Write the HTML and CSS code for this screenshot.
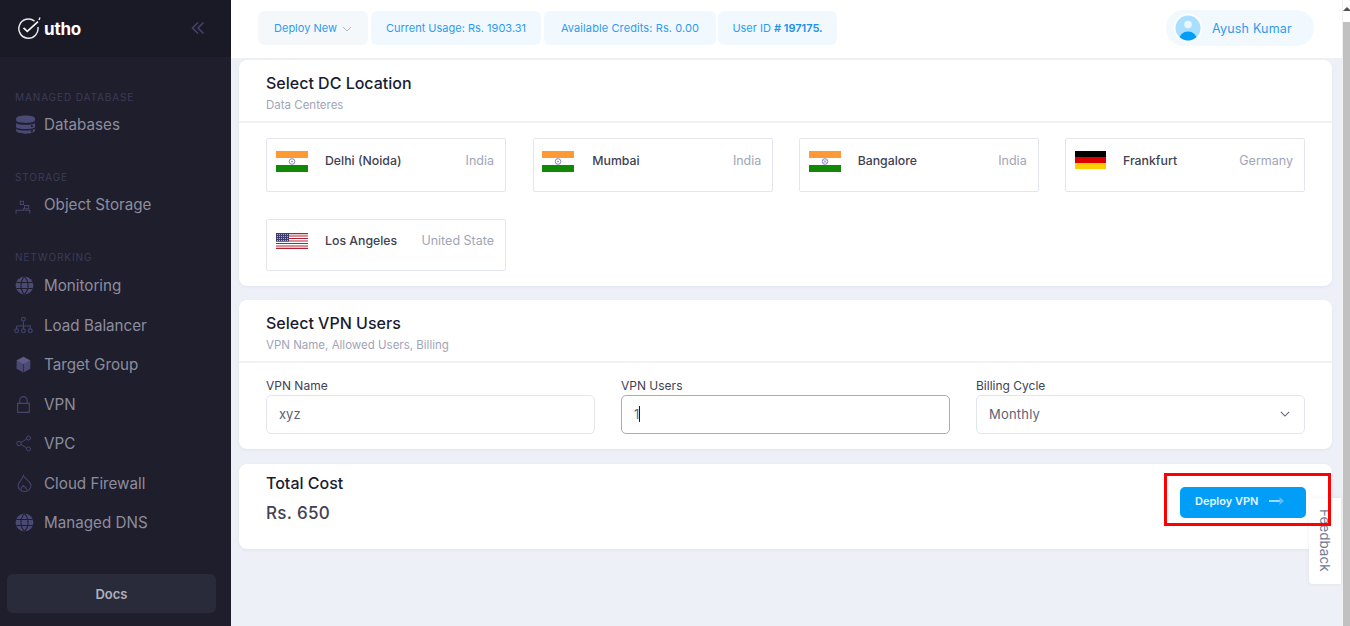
FILE: index.html
```html
<!DOCTYPE html>
<html lang="en">
<head>
<meta charset="utf-8">
<title>Deploy VPN</title>
<link rel="stylesheet" href="styles.css">
</head>
<body>
<div class="app">
  <aside class="sidebar">
    <div class="brand">
      <div class="logo">
        <svg class="logo-mark" viewBox="0 0 26 24" width="26" height="24"><path d="M17.5 5.2A9.6 9.6 0 1 0 20.9 11" fill="none" stroke="#e8e8e8" stroke-width="1.5"/><path d="M6.5 11.8l3.8 3.6L21 5.6" fill="none" stroke="#f4f4f4" stroke-width="1.7"/><path d="M23 1.5l-1 2.6" stroke="#f4f4f4" stroke-width="1.3"/></svg>
        <span class="logo-text">utho</span>
      </div>
      <svg class="collapse" viewBox="0 0 14 14" width="14" height="14"><path d="M7 1.5L1.5 7 7 12.5M12.5 1.5L7 7l5.5 5.5" fill="none" stroke="#45456f" stroke-width="1.5"/></svg>
    </div>
    <nav class="nav">
      <div class="nav-label">MANAGED DATABASE</div>
      <a class="nav-item"><svg class="nav-icon" viewBox="-1 0 18 18"><path d="M0 3.5C0 1.500 4 .5 9 .5s9 1 9 3v1.500c0 1.500-4 2.500-9 2.500S0 6.500 0 5zM0 7.500c2 1.300 5 1.800 9 1.800s7-.5 9-1.800v4c-2 1.300-5 1.800-9 1.800s-7-.5-9-1.800zM0 13c2 1.300 5 1.800 9 1.800s7-.5 9-1.800v2c0 1.500-4 2.700-9 2.700S0 16.500 0 15z" fill="#4a4a75"/><circle cx="15" cy="10.500" r="1" fill="#1e1e2d"/><circle cx="15" cy="15.500" r="1" fill="#1e1e2d"/></svg>Databases</a>
      <div class="nav-label spaced">STORAGE</div>
      <a class="nav-item"><svg class="nav-icon" viewBox="0 0 18 18" fill="none" stroke="#45456f" stroke-width="1"><path d="M5 6h3v3H5zM9 10h4v3H9zM1 17.500v-3h7v-2M9 14.500h5v3"/></svg>Object Storage</a>
      <div class="nav-label spaced nav-label-net">NETWORKING</div>
      <a class="nav-item"><svg class="nav-icon" viewBox="1 1 16 16" fill="none"><circle cx="9" cy="9" r="7.500" fill="#4a4a75"/><path d="M2 6.500h14M2 11.500h14M9 1.500c-4 4-4 11 0 15M9 1.500c4 4 4 11 0 15" stroke="#1e1e2d" stroke-width=".9"/></svg>Monitoring</a>
      <a class="nav-item"><svg class="nav-icon" viewBox="1 0 18 18" fill="none" stroke="#45456f" stroke-width="1"><circle cx="9" cy="3" r="1.800"/><circle cx="2.500" cy="14" r="1.800"/><circle cx="9" cy="14" r="1.800"/><circle cx="15.500" cy="14" r="1.800"/><path d="M9 5v7M2.500 9.500h13v2.500M2.500 9.500v2.500"/></svg>Load Balancer</a>
      <a class="nav-item"><svg class="nav-icon" viewBox="1 0 18 18"><path d="M9 1.500l6.500 3.500v8L9 16.500 2.500 13V5z" fill="#4a4a75"/><path d="M3 5.300L9 8.500l6-3.200L9 2.200z" fill="#5d5d8a"/><path d="M9 8.500v7.500" stroke="#1e1e2d" stroke-width=".6"/></svg>Target Group</a>
      <a class="nav-item"><svg class="nav-icon" viewBox="1 0 18 18" fill="none" stroke="#45456f" stroke-width="1.100"><path d="M3.500 8h11v8.500h-11zM5.500 8V5a3.500 3.500 0 0 1 7 0v3"/></svg>VPN</a>
      <a class="nav-item"><svg class="nav-icon" viewBox="0 -.5 19 19" fill="none" stroke="#45456f" stroke-width="1"><circle cx="4" cy="9" r="2.200"/><circle cx="13.500" cy="3.500" r="2"/><circle cx="13.500" cy="14.500" r="2"/><path d="M6 8l5.800-3.500M6 10l5.800 3.500"/></svg>VPC</a>
      <a class="nav-item"><svg class="nav-icon" viewBox="0 0 18 18" fill="none" stroke="#45456f" stroke-width="1"><path d="M8 1.500c1 3 6 4.500 7 8.500 .8 3.500-2.500 6.500-6 6.500S2.500 14 3 10.500C3.400 7.500 7 5 8 1.500z"/><path d="M6 14.500c-.5-2 1-2.500 2-3.500 1 1 3.500 2 2.500 4"/></svg>Cloud Firewall</a>
      <a class="nav-item"><svg class="nav-icon" viewBox="1 1 16 16" fill="none"><circle cx="9" cy="9" r="7.500" fill="#4a4a75"/><path d="M2 6.500h14M2 11.500h14M9 1.500c-4 4-4 11 0 15M9 1.500c4 4 4 11 0 15" stroke="#1e1e2d" stroke-width=".9"/></svg>Managed DNS</a>
    </nav>
    <div class="docs">Docs</div>
  </aside>

  <div class="main">
    <header class="topbar">
      <div class="chip chip-grey">Deploy New <svg class="caret" viewBox="0 0 10 6" width="10" height="6"><path d="M1 1l4 4 4-4" fill="none" stroke="#b5b5c3" stroke-width="1"/></svg></div>
      <div class="chip chip-usage">Current Usage: Rs. 1903.31</div>
      <div class="chip chip-credits">Available Credits: Rs. 0.00</div>
      <div class="chip chip-user">User ID <b class="chip-strong">#&nbsp;197175.</b></div>
      <div class="profile">
        <svg class="avatar" viewBox="0 0 30 30" width="30" height="30"><defs><clipPath id="av"><circle cx="15" cy="15" r="12.500"/></clipPath></defs><circle cx="15" cy="15" r="14.500" fill="#fff" opacity=".7"/><circle cx="15" cy="15" r="12.500" fill="#a8dfff"/><circle cx="15" cy="11.500" r="3.800" fill="#eaf7ff"/><ellipse cx="15" cy="27" rx="9" ry="8.500" fill="#009ef7" clip-path="url(#av)"/></svg>
        <span class="profile-name">Ayush Kumar</span>
      </div>
    </header>

    <div class="content">
      <section class="card">
        <div class="card-head">
          <h2 class="card-title">Select DC Location</h2>
          <p class="card-sub">Data Centeres</p>
        </div>
        <div class="locations">
          <div class="loc">
            <svg class="flag" viewBox="0 0 32 21" width="32" height="21"><rect width="32" height="7" fill="#f93"/><rect y="14" width="32" height="7" fill="#128807"/><circle cx="16" cy="10.500" r="2.800" fill="none" stroke="#6a6ab8" stroke-width=".8"/><circle cx="16" cy="10.500" r=".8" fill="#6a6ab8"/></svg>
            <span class="loc-name">Delhi (Noida)</span><span class="loc-country">India</span>
          </div>
          <div class="loc loc-second">
            <svg class="flag" viewBox="0 0 32 21" width="32" height="21"><rect width="32" height="7" fill="#f93"/><rect y="14" width="32" height="7" fill="#128807"/><circle cx="16" cy="10.500" r="2.800" fill="none" stroke="#6a6ab8" stroke-width=".8"/><circle cx="16" cy="10.500" r=".8" fill="#6a6ab8"/></svg>
            <span class="loc-name">Mumbai</span><span class="loc-country">India</span>
          </div>
          <div class="loc">
            <svg class="flag" viewBox="0 0 32 21" width="32" height="21"><rect width="32" height="7" fill="#f93"/><rect y="14" width="32" height="7" fill="#128807"/><circle cx="16" cy="10.500" r="2.800" fill="none" stroke="#6a6ab8" stroke-width=".8"/><path d="M14.500 9l3 3M17.500 9l-3 3" stroke="#6a6ab8" stroke-width=".6"/></svg>
            <span class="loc-name">Bangalore</span><span class="loc-country">India</span>
          </div>
          <div class="loc">
            <svg class="flag" viewBox="0 0 31 18" width="31" height="18"><rect width="31" height="6" fill="#000"/><rect y="6" width="31" height="6" fill="#d00"/><rect y="12" width="31" height="6" fill="#ffce00"/></svg>
            <span class="loc-name">Frankfurt</span><span class="loc-country">Germany</span>
          </div>
          <div class="loc loc-us">
            <svg class="flag" viewBox="0 0 32 16" width="32" height="16"><rect width="32" height="16" fill="#fff"/><path d="M0 .6h32M0 3h32M0 5.500h32M0 8h32M0 10.500h32M0 13h32M0 15.400h32" stroke="#b22234" stroke-width="1.200"/><rect width="13" height="8.500" fill="#3c3b6e"/><path d="M1 1.500h11M1 3.500h11M1 5.500h11M1 7.500h11" stroke="#cfcfe6" stroke-width=".8" stroke-dasharray="1 1"/></svg>
            <span class="loc-name">Los Angeles</span><span class="loc-country">United State</span>
          </div>
        </div>
      </section>

      <section class="card">
        <div class="card-head">
          <h2 class="card-title">Select VPN Users</h2>
          <p class="card-sub">VPN Name, Allowed Users, Billing</p>
        </div>
        <div class="form">
          <div class="field">
            <span class="field-label">VPN Name</span>
            <div class="input">xyz</div>
          </div>
          <div class="field">
            <span class="field-label">VPN Users</span>
            <div class="input input-focus">1<span class="cursor"></span></div>
          </div>
          <div class="field">
            <span class="field-label">Billing Cycle</span>
            <div class="input input-select">Monthly <svg viewBox="0 0 12 7" width="10" height="6"><path d="M1 1l5 5 5-5" fill="none" stroke="#5e6278" stroke-width="1.300"/></svg></div>
          </div>
        </div>
      </section>

      <section class="card total">
        <div class="total-info">
          <h2 class="card-title">Total Cost</h2>
          <div class="price">Rs. 650</div>
        </div>
        <button class="deploy">Deploy VPN
          <svg viewBox="0 0 16 10" width="16" height="10"><path d="M0 5h13" stroke="#d5efff" stroke-width="1.500"/><path d="M10.500 1L15 5l-4.500 4z" fill="#5cbdf9"/></svg>
        </button>
      </section>
    </div>
  </div>

  <div class="scrollbar">
    <div class="scroll-up"><span class="scroll-arrow"></span></div>
    <div class="scroll-thumb"></div>
  </div>

  <div class="feedback"><span class="feedback-text">Feedback</span></div>
  <div class="highlight"></div>
</div>
</body>
</html>
```
FILE: styles.css
```css
* { box-sizing: border-box; }
html, body { margin: 0; height: 100%; overflow: hidden; }
body { font-family: Inter, "Open Sans", sans-serif; background: #eef0f8; color: #181c32; }
.app { position: relative; display: grid; grid-template-columns: 231px 1fr 8px; height: 626px; width: 1350px; }

.sidebar { background: #1e1e2d; display: flex; flex-direction: column; height: 626px; }
.brand { height: 57px; background: #1a1a27; display: flex; align-items: center; justify-content: space-between; padding: 0 26px 1px 17px; }
.logo { display: flex; align-items: center; gap: 1px; }
.logo-text { color: #fff; font-size: 17px; font-weight: 700; letter-spacing: -.2px; margin-top: 1px; }
.nav { padding: 33px 0 0 15px; flex: 1; }
.nav-label { height: 14px; line-height: 14px; font-size: 10px; letter-spacing: .9px; color: #3c3c56; margin-bottom: 1px; }
.nav-label.spaced { margin-top: 25px; }
.nav-label.nav-label-net { margin-top: 26px; margin-bottom: 2px; }
.nav-item { display: flex; align-items: center; height: 39.5px; font-size: 15.2px; color: #8d8d9e; gap: 10px; }
.nav-icon { width: 19px; height: 19px; flex: none; overflow: visible; }
.docs { margin: 0 15px 13px 7px; height: 39px; background: #2a2b3a; border-radius: 6px; color: #b0b0bc; font-size: 13px; font-weight: 600; display: flex; align-items: center; justify-content: center; }

.main { display: flex; flex-direction: column; min-width: 0; }
.topbar { height: 58px; background: #fff; display: flex; align-items: center; gap: 3px; padding: 0 28px 2px 27px; flex: none; }
.chip { height: 34px; background: #f1f9ff; border-radius: 6px; color: #2f9bf0; font-size: 11px; display: flex; align-items: center; justify-content: center; white-space: nowrap; }
.chip-grey { width: 110px; background: #f5f8fa; gap: 5px; }
.chip-usage { width: 170px; }
.chip-credits { width: 172px; letter-spacing: .1px; }
.chip-user { width: 119px; margin-left: -1px; }
.caret { margin-top: 2px; }
.chip-strong { font-weight: 600; margin-left: 3px; color: #2090e8; }
.profile { margin-left: auto; width: 148px; height: 36px; border-radius: 18px; background: #f1f9ff; display: flex; align-items: center; padding-left: 7px; gap: 9px; }
.avatar { flex: none; }
.profile-name { color: #2f9bf0; font-size: 12.500px; letter-spacing: .2px; }

.content { padding: 2px 10px 0 8px; display: flex; flex-direction: column; gap: 14px; }
.card { background: #fff; border-radius: 8px; box-shadow: 0 1px 3px rgba(80, 90, 140, .08); }
.card-head { height: 63px; padding: 13px 27px 0; border-bottom: 2px solid #eff2f5; }
.card-title { margin: 0; font-size: 16px; line-height: 20px; font-weight: 500; color: #181c32; }
.card-sub { margin: 5px 0 0; font-size: 11.500px; line-height: 14px; color: #a1a5b7; }

.locations { display: grid; grid-template-columns: repeat(4, 240px); column-gap: 26.330px; row-gap: 27px; padding: 15px 27px 15px; }
.loc { height: 54px; border: 1px solid #e4e6ef; border-radius: 2px; display: flex; align-items: flex-start; padding: 12px 11px 0 9px; }
.loc-second { transform: translateX(1px); padding-left: 8px; }
.loc-second .flag { margin-right: 18px; }
.loc-us { height: 52px; padding-top: 13px; }
.flag { flex: none; margin-right: 17px; }
.loc-name { font-size: 12.300px; font-weight: 500; line-height: 20px; color: #3f4254; white-space: nowrap; }
.loc-country { margin-left: auto; font-size: 12.500px; line-height: 20px; color: #a1a5b7; white-space: nowrap; }
.loc-us .loc-name, .loc-us .loc-country { margin-top: -2px; }

.form { display: grid; grid-template-columns: repeat(3, 329px); column-gap: 26px; padding: 14px 27px; height: 86px; }
.field { display: flex; flex-direction: column; }
.field-label { font-size: 12px; line-height: 18px; color: #3f4254; }
.input { height: 39px; border: 1px solid #e4e6ef; border-radius: 5px; padding: 0 12px 1px; display: flex; align-items: center; font-size: 13px; color: #5e6278; }
.input-focus { border-color: #a9abb8; }
.cursor { display: inline-block; width: 1px; height: 16px; background: #181c32; }
.input-select { justify-content: space-between; padding-right: 14px; letter-spacing: .2px; }

.total { height: 85px; margin-top: 1px; display: flex; justify-content: space-between; align-items: flex-start; padding: 9px 26px 0 27px; }
.price { font-size: 17px; line-height: 24px; font-weight: 500; margin-top: 8px; color: #3f4254; letter-spacing: .3px; }
.deploy { margin-top: 14px; width: 126px; height: 31px; border: 0; border-radius: 5px; background: #009ef7; color: #e6f5ff; font-family: inherit; font-size: 11px; font-weight: 600; display: flex; align-items: center; gap: 11px; padding: 0 0 3px 15px; }

.scrollbar { display: flex; flex-direction: column; background: #f1f1f1; padding-left: 1px; }
.scroll-up { height: 22px; background: #fff; display: flex; justify-content: center; padding-top: 7px; }
.scroll-arrow { width: 0; height: 0; border-left: 4px solid transparent; border-right: 4px solid transparent; border-bottom: 4px solid #505050; }
.scroll-thumb { flex: 1; background: #c1c1c1; }

.highlight { position: absolute; left: 1164px; top: 473px; width: 167px; height: 53px; border: 3px solid #f00; pointer-events: none; }
.feedback { position: absolute; left: 1309px; top: 498px; width: 32px; height: 86px; background: #fff; border-radius: 4px 0 0 4px; box-shadow: 0 0 4px rgba(80, 90, 140, .1); display: flex; justify-content: center; padding-top: 11px; }
.feedback-text { writing-mode: vertical-rl; font-size: 13.500px; color: #777a90; }
```
